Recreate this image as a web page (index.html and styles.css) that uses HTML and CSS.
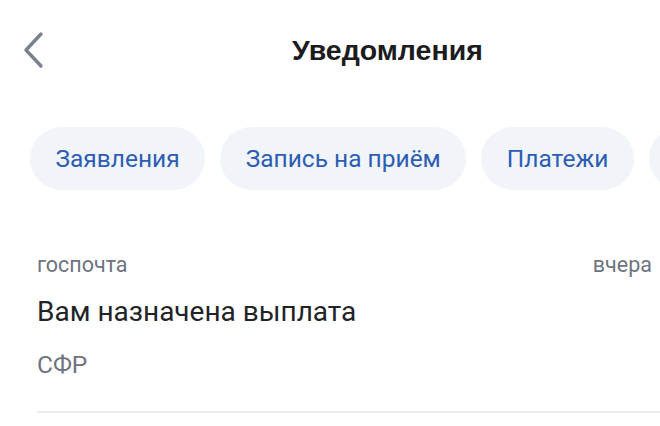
FILE: index.html
```html
<!DOCTYPE html>
<html lang="ru">
<head>
<meta charset="utf-8">
<link rel="stylesheet" href="styles.css">
</head>
<body>
<div class="screen">
  <header class="header">
    <span class="back">
      <svg width="22" height="38" viewBox="0 0 22 38"><path d="M19 3 L4 19 L19 35" fill="none" stroke="#7b8191" stroke-width="3.4" stroke-linecap="round" stroke-linejoin="round"/></svg>
    </span>
    <h1 class="title">Уведомления</h1>
  </header>
  <nav class="chips">
    <span class="chip">Заявления</span>
    <span class="chip">Запись на приём</span>
    <span class="chip">Платежи</span>
    <span class="chip chip-more" aria-hidden="true"></span>
  </nav>
  <section class="item">
    <div class="meta"><span>госпочта</span><span>вчера</span></div>
    <div class="item-title">Вам назначена выплата</div>
    <div class="item-sub">СФР</div>
  </section>
</div>
</body>
</html>
```
FILE: styles.css
```css
html, body {
  margin: 0;
  padding: 0;
  background: #ffffff;
}
body {
  font-family: Roboto, "Noto Sans", sans-serif;
  width: 660px;
  height: 426px;
  overflow: hidden;
}
.screen {
  display: flex;
  flex-direction: column;
}
.header {
  display: flex;
  align-items: center;
  height: 100px;
  padding-left: 22px;
}
.back {
  display: flex;
  width: 22px;
}
.title {
  margin: 0 0 0 248px;
  font-family: "Liberation Sans", Arial, sans-serif;
  font-weight: 700;
  font-size: 28.5px;
  color: #1c1c1e;
}
.chips {
  display: flex;
  gap: 15px;
  padding: 27px 0 0 30px;
  white-space: nowrap;
  overflow: hidden;
}
.chip {
  flex-shrink: 0;
  display: flex;
  align-items: center;
  height: 63px;
  padding: 0 25.5px;
  border-radius: 32px;
  background: #f1f5fa;
  color: #2d5db3;
  font-size: 24.5px;
}
.chip-more {
  width: 120px;
}
.item {
  margin: 0 0 0 37px;
  padding-top: 62px;
  padding-bottom: 31px;
  border-bottom: 2px solid #ececee;
}
.meta {
  display: flex;
  justify-content: space-between;
  padding-right: 8px;
  font-size: 21.5px;
  line-height: 26px;
  color: #6e7380;
}
.item-title {
  margin-top: 17px;
  font-size: 28px;
  line-height: 34px;
  color: #222326;
}
.item-sub {
  margin-top: 21px;
  font-size: 24.5px;
  line-height: 30px;
  color: #6e7380;
}
```
